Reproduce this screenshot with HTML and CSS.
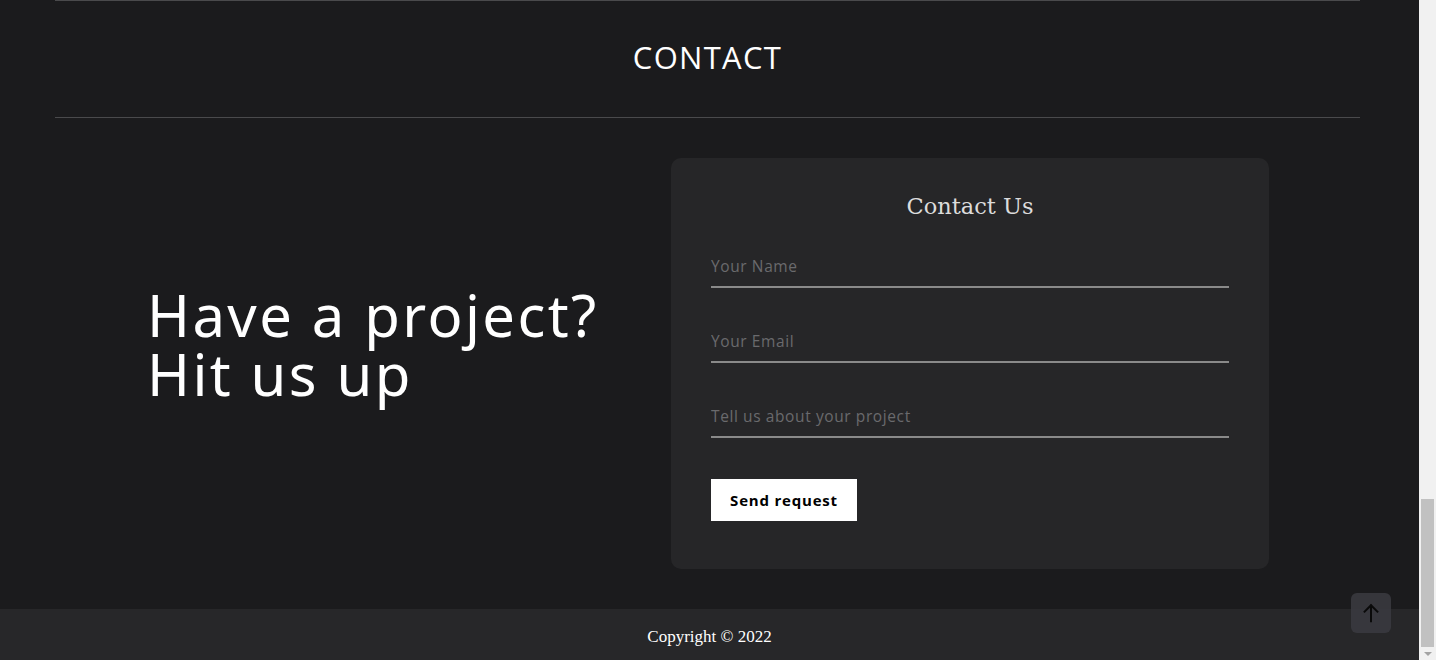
FILE: index.html
```html
<!DOCTYPE html>
<html lang="en">
<head>
<meta charset="utf-8">
<title>Contact</title>
<link rel="stylesheet" href="styles.css">
</head>
<body>
<div class="viewport">
  <div class="page">
    <section class="contact">
      <div class="title-bar">
        <h2 class="section-title">CONTACT</h2>
      </div>
      <div class="contact-row">
        <div class="pitch">
          <p class="pitch-text"><span class="pitch-line">Have a project?</span><span class="pitch-line">Hit us up</span></p>
        </div>
        <form class="card">
          <h3 class="card-title">Contact Us</h3>
          <div class="field"><input class="input" type="text" placeholder="Your Name"></div>
          <div class="field"><input class="input" type="email" placeholder="Your Email"></div>
          <div class="field"><input class="input" type="text" placeholder="Tell us about your project"></div>
          <button class="send" type="button">Send request</button>
        </form>
      </div>
    </section>
    <footer class="footer">
      <p class="copyright">Copyright © 2022</p>
      <button class="to-top" type="button" aria-label="Back to top">
        <svg width="22" height="22" viewBox="0 0 24 24" fill="none" stroke="#0a0a0a" stroke-width="2.2" stroke-linecap="square">
          <path d="M12 21V4"/>
          <path d="M5 10.5l7-7 7 7"/>
        </svg>
      </button>
    </footer>
  </div>
  <div class="scrollbar">
    <div class="scroll-track"><div class="scroll-thumb"></div></div>
    <div class="scroll-arrow"></div>
  </div>
</div>
</body>
</html>
```

FILE: styles.css
```css
* { box-sizing: border-box; }
html, body { margin: 0; padding: 0; height: 100%; overflow: hidden; }
body { background: #1b1b1d; font-family: "Open Sans", "Noto Sans", sans-serif; }

.viewport { display: flex; height: 660px; width: 1436px; }
.page { width: 1419px; display: flex; flex-direction: column; background: #1b1b1d; }

.contact { flex: 1; display: flex; flex-direction: column; }
.title-bar {
  margin: 0 59px 0 55px;
  border-top: 1px solid #4a4a4c;
  border-bottom: 1px solid #4a4a4c;
  height: 118px;
  display: flex; align-items: center; justify-content: center;
}
.section-title {
  margin: 0;
  color: #ffffff;
  font-family: "Open Sans", sans-serif;
  font-weight: 500;
  font-size: 31px;
  letter-spacing: 1.3px;
  padding-bottom: 4px;
}

.contact-row {
  display: flex; align-items: flex-start;
  padding: 40px 0 0 147px;
  height: 491px;
}
.pitch { width: 524px; padding-top: 127px; }
.pitch-text {
  margin: 0;
  color: #ffffff;
  font-family: "Noto Sans", "Open Sans", sans-serif;
  font-size: 58px;
  letter-spacing: 2.4px;
  font-weight: 400;
}
.pitch-line { display: block; line-height: 59px; }

.card {
  width: 598px; height: 411px;
  background: #262628;
  border-radius: 10px;
  padding: 30px 40px 0 40px;
  display: flex; flex-direction: column;
}
.card-title {
  margin: 0 0 26px 0;
  text-align: center;
  color: #dcdcdc;
  font-family: "DejaVu Serif", "Liberation Serif", serif;
  font-weight: 400;
  font-size: 22.5px;
  line-height: 36px;
}
.field { height: 75px; display: flex; align-items: flex-start; }
.input {
  width: 100%;
  height: 38px;
  background: transparent;
  border: none;
  border-bottom: 2px solid #8a8a8a;
  padding: 0 0 4px 0;
  color: #ddd;
  font-family: "Open Sans", sans-serif;
  font-size: 15.5px;
  letter-spacing: 0.6px;
  outline: none;
}
.input::placeholder { color: #6a6a6d; }
.send {
  margin-top: 4px;
  align-self: flex-start;
  width: 146px; height: 42px;
  background: #ffffff;
  border: none;
  color: #000;
  font-family: "Open Sans", sans-serif;
  font-weight: 700;
  font-size: 15px;
  letter-spacing: 0.8px;
  padding: 0;
}

.footer {
  height: 51px;
  background: #272729;
  display: flex; align-items: center; justify-content: center;
  position: relative;
}
.copyright {
  margin: 4px 0 0 0;
  color: #ffffff;
  font-family: "Liberation Serif", serif;
  font-size: 17px;
}
.to-top {
  position: absolute;
  left: 1351px; top: -16px;
  width: 40px; height: 40px;
  border: none; border-radius: 6px;
  background: rgba(58, 58, 63, 0.9);
  display: flex; align-items: center; justify-content: center;
  padding: 0;
}

.scrollbar { width: 17px; background: #f1f1f1; display: flex; flex-direction: column; }
.scroll-track { flex: 1; display: flex; flex-direction: column; justify-content: flex-end; padding: 0 2px 0 2px; }
.scroll-thumb { height: 148px; background: #c1c1c1; }
.scroll-arrow {
  height: 13px;
  display: flex; justify-content: center; align-items: center;
}
.scroll-arrow::before {
  content: "";
  border-left: 4px solid transparent;
  border-right: 4px solid transparent;
  border-top: 4px solid #a3a3a3;
}
```
